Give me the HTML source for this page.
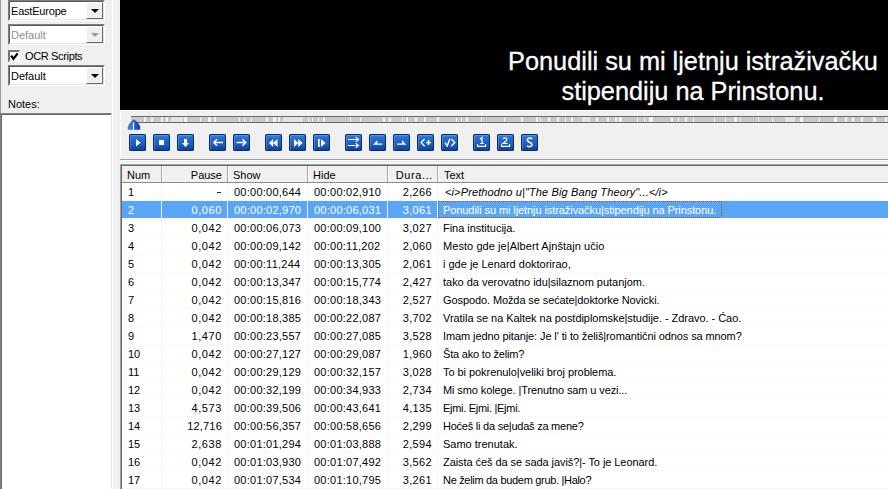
<!DOCTYPE html>
<html><head><meta charset="utf-8">
<style>
*{margin:0;padding:0;box-sizing:border-box}
html,body{width:888px;height:489px;overflow:hidden;background:#f0f0f0;font-family:"Liberation Sans",sans-serif;font-size:11px;color:#000;position:relative}
.sub{-webkit-text-stroke:0.3px #fff}
.a{position:absolute}
.combo{position:absolute;left:8px;width:97px;height:21px;background:#fff;border-top:1px solid #7f7f7f;border-left:1px solid #7f7f7f;border-right:1px solid #fff;border-bottom:1px solid #fff}
.combo .in{position:absolute;left:0;top:0;right:0;bottom:0;border-top:1px solid #5a5a5a;border-left:1px solid #5a5a5a;border-right:1px solid #e4e4e4;border-bottom:1px solid #e4e4e4}
.combo .t{position:absolute;left:1px;top:3px;line-height:13px;white-space:nowrap}
.combo .btn{position:absolute;right:0;top:0;width:17px;height:17px;background:#efefef;border-top:1px solid #fff;border-left:1px solid #fff;border-right:1px solid #6a6a6a;border-bottom:1px solid #6a6a6a}
.combo .btn:after{content:"";position:absolute;left:4px;top:6px;border-left:4px solid transparent;border-right:4px solid transparent;border-top:4px solid #000}
.combo.dis .t{color:#8f8f8f}
.combo.dis .btn:after{border-top-color:#9a9a9a}
.sub{position:absolute;left:420px;width:546px;text-align:center;color:#fff;font-size:25.3px;line-height:29px;white-space:nowrap}
.track{position:absolute;left:131px;top:116px;width:757px;height:7px;background:#c9c9c9;border-top:1px solid #6a6a6a;border-bottom:1px solid #6a6a6a}
.ts{position:absolute;top:117px;height:5px;background:#f2f2f2}
.b{position:absolute;top:134px;width:17px;height:17px;border-radius:2px;background:linear-gradient(#3f84da,#2469cc 30%,#1d5ec2 60%,#134caa 82%,#0c3c8c);box-shadow:inset 0 0 0 1px #082d68,inset 1px 1px 0 1px rgba(140,190,250,0.35)}
.b svg{position:absolute;left:0;top:0}
.hdr{position:absolute;left:122px;top:166px;width:766px;height:17px;background:#f0f0f0;border-bottom:1px solid #8c8c8c}
.hc{position:absolute;top:167px;height:16px;line-height:17px;white-space:nowrap}
.hsep{position:absolute;top:166px;width:1px;height:16px;background:#a6a6a6}
.hsepw{position:absolute;top:166px;width:1px;height:16px;background:#fdfdfd}
.row{position:absolute;left:122px;width:766px;height:18px;border-bottom:1px solid #f8f8f8;background-clip:padding-box}
.c{position:absolute;top:1px;line-height:17px;white-space:nowrap}
.r{text-align:right}
.tm{letter-spacing:0.25px}
.nm{letter-spacing:0.6px}
.tx{letter-spacing:-0.08px}
.it{font-style:italic;letter-spacing:0.15px}
.sel{background-color:#5aa6f6;color:#fff}
.vg{position:absolute;top:183px;width:1px;height:306px;background:#f6f6f6}
.vgs{position:absolute;top:201px;width:1px;height:17px;background:#eef6ff}
</style></head><body>
<!-- left panel -->
<div class="a" style="left:0;top:0;width:1px;height:489px;background:#9c9c9c"></div>
<div class="combo" style="top:0"><div class="in"><span class="t" style="letter-spacing:-0.2px">EastEurope</span><div class="btn"></div></div></div>
<div class="combo dis" style="top:24px"><div class="in"><span class="t">Default</span><div class="btn"></div></div></div>
<div class="a" style="left:8px;top:50px;width:12px;height:12px;background:#fff;border-top:2px solid #767676;border-left:2px solid #767676;border-right:1px solid #fafafa;border-bottom:1px solid #fafafa"></div>
<svg class="a" style="left:8px;top:50px" width="12" height="12"><path d="M3.2 5.6 L5.4 8.9 L9.7 3.4" stroke="#000" stroke-width="2.3" fill="none"/></svg>
<div class="a" style="left:25px;top:50px;line-height:13px;white-space:nowrap;letter-spacing:-0.35px">OCR Scripts</div>
<div class="combo" style="top:65px"><div class="in"><span class="t">Default</span><div class="btn"></div></div></div>
<div class="a" style="left:8px;top:98px;line-height:13px">Notes:</div>
<div class="a" style="left:0;top:113px;width:112px;height:376px;background:#fff;border-top:1px solid #808080;border-left:1px solid #808080;border-right:1px solid #e2e2e2"></div>
<div class="a" style="left:1px;top:114px;width:110px;height:375px;border-top:1px solid #6a6a6a;border-left:1px solid #6a6a6a"></div>
<div class="a" style="left:112px;top:0;width:1px;height:489px;background:#fcfcfc"></div>

<!-- video -->
<div class="a" style="left:120px;top:0;width:768px;height:110px;background:#000"></div>
<div class="sub" style="top:47px">Ponudili su mi ljetnju istraživačku</div>
<div class="sub" style="top:77px">stipendiju na Prinstonu.</div>
<div class="a" style="left:120px;top:110px;width:1px;height:49px;background:#fff"></div>
<div class="a" style="left:120px;top:110px;width:768px;height:1px;background:#fff"></div>

<!-- track -->
<div class="track"></div>
<div class="ts" style="left:144px;width:2px"></div><div class="ts" style="left:151px;width:2px"></div><div class="ts" style="left:161px;width:2px"></div><div class="ts" style="left:166px;width:2px"></div><div class="ts" style="left:171px;width:12px;background:#e2e2e2"></div><div class="ts" style="left:184px;width:3px"></div><div class="ts" style="left:200px;width:1px"></div><div class="ts" style="left:208px;width:3px"></div><div class="ts" style="left:214px;width:2px"></div><div class="ts" style="left:239px;width:1px"></div><div class="ts" style="left:244px;width:1px"></div><div class="ts" style="left:251px;width:1px"></div><div class="ts" style="left:266px;width:2px"></div><div class="ts" style="left:273px;width:3px"></div><div class="ts" style="left:278px;width:2px"></div><div class="ts" style="left:283px;width:8px;background:#e2e2e2"></div><div class="ts" style="left:291px;width:12px;background:#e2e2e2"></div><div class="ts" style="left:308px;width:1px"></div><div class="ts" style="left:312px;width:1px"></div><div class="ts" style="left:318px;width:1px"></div><div class="ts" style="left:323px;width:2px"></div><div class="ts" style="left:350px;width:1px"></div><div class="ts" style="left:360px;width:1px"></div><div class="ts" style="left:383px;width:2px"></div><div class="ts" style="left:389px;width:2px"></div><div class="ts" style="left:402px;width:1px"></div><div class="ts" style="left:406px;width:2px"></div><div class="ts" style="left:415px;width:2px"></div><div class="ts" style="left:424px;width:2px"></div><div class="ts" style="left:437px;width:2px"></div><div class="ts" style="left:456px;width:1px"></div><div class="ts" style="left:461px;width:1px"></div><div class="ts" style="left:466px;width:2px"></div><div class="ts" style="left:481px;width:1px"></div><div class="ts" style="left:504px;width:1px"></div><div class="ts" style="left:521px;width:2px"></div><div class="ts" style="left:536px;width:2px"></div><div class="ts" style="left:540px;width:1px"></div><div class="ts" style="left:548px;width:2px"></div><div class="ts" style="left:557px;width:2px"></div><div class="ts" style="left:565px;width:1px"></div><div class="ts" style="left:571px;width:2px"></div><div class="ts" style="left:582px;width:8px;background:#e2e2e2"></div><div class="ts" style="left:596px;width:2px"></div><div class="ts" style="left:607px;width:2px"></div><div class="ts" style="left:615px;width:2px"></div><div class="ts" style="left:619px;width:3px"></div><div class="ts" style="left:637px;width:1px"></div><div class="ts" style="left:644px;width:1px"></div><div class="ts" style="left:649px;width:4px"></div><div class="ts" style="left:671px;width:2px"></div><div class="ts" style="left:678px;width:1px"></div><div class="ts" style="left:685px;width:2px"></div><div class="ts" style="left:693px;width:1px"></div><div class="ts" style="left:714px;width:1px"></div><div class="ts" style="left:725px;width:1px"></div><div class="ts" style="left:734px;width:3px"></div><div class="ts" style="left:740px;width:1px"></div><div class="ts" style="left:758px;width:1px"></div><div class="ts" style="left:772px;width:1px"></div><div class="ts" style="left:785px;width:10px;background:#e2e2e2"></div><div class="ts" style="left:800px;width:3px"></div><div class="ts" style="left:819px;width:1px"></div><div class="ts" style="left:834px;width:3px"></div><div class="ts" style="left:845px;width:2px"></div><div class="ts" style="left:852px;width:2px"></div><div class="ts" style="left:861px;width:2px"></div><div class="ts" style="left:873px;width:3px"></div><div class="ts" style="left:885px;width:2px"></div>
<svg class="a" style="left:127px;top:119px" width="14" height="12" viewBox="0 0 14 12"><defs><linearGradient id="tg" x1="0" x2="1" y1="0" y2="0"><stop offset="0" stop-color="#4a8ae0"/><stop offset="0.5" stop-color="#2a5cc8"/><stop offset="1" stop-color="#1a3aa8"/></linearGradient></defs><path d="M7 0.6 Q9 1.6 12 5 Q13.6 7.2 13.2 10.8 H0.8 Q0.4 7.2 2 5 Q5 1.6 7 0.6 Z" fill="url(#tg)"/><path d="M6.5 3.2 V10.8" stroke="#fff" stroke-width="1.3"/></svg>

<!-- buttons -->
<div class="b" style="left:129px"><svg width="17" height="17" viewBox="0 0 17 17"><path d="M7 5 L11.6 8.8 L7 12.6 Z" fill="#fff"/></svg></div>
<div class="b" style="left:153px"><svg width="17" height="17" viewBox="0 0 17 17"><rect x="6" y="6" width="5" height="5" fill="#fff"/></svg></div>
<div class="b" style="left:177px"><svg width="17" height="17" viewBox="0 0 17 17"><path d="M7 5 H10 V9 H12 L8.5 13 L5 9 H7 Z" fill="#fff"/></svg></div>
<div class="b" style="left:209px"><svg width="17" height="17" viewBox="0 0 17 17"><path d="M4.8 8.5 H14 M8 5.2 L4.8 8.5 L8 11.8" stroke="#fff" stroke-width="1.5" fill="none"/></svg></div>
<div class="b" style="left:233px"><svg width="17" height="17" viewBox="0 0 17 17"><path d="M3.5 8.5 H12.7 M9.5 5.2 L12.7 8.5 L9.5 11.8" stroke="#fff" stroke-width="1.5" fill="none"/></svg></div>
<div class="b" style="left:265px"><svg width="17" height="17" viewBox="0 0 17 17"><path d="M8.2 5 L4 9 L8.2 13 Z M12.5 5 L8.2 9 L12.5 13 Z" fill="#fff"/></svg></div>
<div class="b" style="left:289px"><svg width="17" height="17" viewBox="0 0 17 17"><path d="M5 5 L9.2 9 L5 13 Z M9.2 5 L13.5 9 L9.2 13 Z" fill="#fff"/></svg></div>
<div class="b" style="left:313px"><svg width="17" height="17" viewBox="0 0 17 17"><rect x="5" y="5" width="1.7" height="8" fill="#fff"/><path d="M8 5 L12.5 9 L8 13 Z" fill="#fff"/></svg></div>
<div class="b" style="left:345px"><svg width="17" height="17" viewBox="0 0 17 17"><path d="M3 5.5 H13.3 M10.8 3.3 L13.5 5.5 L10.8 7.7 M3 11.5 H13.3 M10.8 9.3 L13.5 11.5 L10.8 13.7" stroke="#fff" stroke-width="1.2" fill="none"/></svg></div>
<div class="b" style="left:369px"><svg width="17" height="17" viewBox="0 0 17 17"><path d="M4 10.8 L8.3 6.2 V9.5 H13.2 V10.8 Z" fill="#fff"/></svg></div>
<div class="b" style="left:393px"><svg width="17" height="17" viewBox="0 0 17 17"><path d="M4 9.5 H9 V6.2 L13.3 10.8 H4 Z" fill="#fff"/></svg></div>
<div class="b" style="left:417px"><svg width="17" height="17" viewBox="0 0 17 17"><path d="M7.6 5 L4.2 8.6 L7.6 12.2 M9 8.6 H14 M11.5 6.1 V11.1" stroke="#fff" stroke-width="1.4" fill="none"/></svg></div>
<div class="b" style="left:441px"><svg width="17" height="17" viewBox="0 0 17 17"><path d="M4 8.6 L6.2 12 L8.8 5 M10.2 5 L13.8 8.6 L10.2 12.2" stroke="#fff" stroke-width="1.4" fill="none"/></svg></div>
<div class="b" style="left:473px"><svg width="17" height="17" viewBox="0 0 17 17"><path d="M4.6 10 V12.4 H12.6 V10" stroke="#fff" stroke-width="1.1" fill="none"/><path d="M7 5.2 L9 3.6 V9.6 M7.2 9.5 H10.8" stroke="#fff" stroke-width="1.2" fill="none"/></svg></div>
<div class="b" style="left:497px"><svg width="17" height="17" viewBox="0 0 17 17"><path d="M4.6 10 V12.4 H12.6 V10" stroke="#fff" stroke-width="1.1" fill="none"/><path d="M5.9 4.9 Q7.6 3.2 9.4 4.2 Q10.6 5.6 9 7 L6 9.5 H10.6" stroke="#fff" stroke-width="1.2" fill="none"/></svg></div>
<div class="b" style="left:521px"><svg width="17" height="17" viewBox="0 0 17 17"><path d="M11.2 4.8 Q9.2 3.6 7.3 4.4 Q5.6 5.6 7 7.4 Q8 8.2 9.6 8.8 Q11.6 10 10.6 11.8 Q8.8 13.4 6 12" stroke="#fff" stroke-width="1.5" fill="none"/></svg></div>

<div class="a" style="left:120px;top:159px;width:768px;height:1px;background:#a0a0a0"></div>
<div class="a" style="left:120px;top:160px;width:768px;height:1px;background:#fff"></div>
<div class="a" style="left:120px;top:163px;width:768px;height:1px;background:#fbfbfb"></div>

<!-- list view -->
<div class="a" style="left:120px;top:164px;width:768px;height:325px;background:#fff;border-top:1px solid #a0a0a0;border-left:1px solid #a0a0a0"></div>
<div class="a" style="left:121px;top:165px;width:767px;height:324px;border-top:1px solid #696969;border-left:1px solid #696969"></div>
<div class="hdr"></div>
<div class="hsep" style="left:161px"></div><div class="hsepw" style="left:162px"></div>
<div class="hsep" style="left:227px"></div><div class="hsepw" style="left:228px"></div>
<div class="hsep" style="left:307px"></div><div class="hsepw" style="left:308px"></div>
<div class="hsep" style="left:387px"></div><div class="hsepw" style="left:388px"></div>
<div class="hsep" style="left:437px"></div><div class="hsepw" style="left:438px"></div>
<div class="hc" style="left:127px">Num</div>
<div class="hc r" style="left:162px;width:60px">Pause</div>
<div class="hc" style="left:233px">Show</div>
<div class="hc" style="left:313px">Hide</div>
<div class="hc r" style="left:380px;width:53px;letter-spacing:0.6px">Dura...</div>
<div class="hc" style="left:444px">Text</div>
<div class="vg" style="left:161px"></div><div class="vg" style="left:227px"></div><div class="vg" style="left:307px"></div><div class="vg" style="left:387px"></div><div class="vg" style="left:437px"></div>
<div class="row" style="top:183px"><div class="c" style="left:6px">1</div><div class="a" style="left:95px;top:9px;width:4px;height:1px;background:#1a1a1a"></div><div class="c tm" style="left:112px">00:00:00,644</div><div class="c tm" style="left:192px">00:00:02,910</div><div class="c r nm" style="left:265px;width:45px;letter-spacing:0.35px">2,266</div><div class="c tx it" style="left:323px;letter-spacing:0.125px">&lt;i&gt;Prethodno u|&quot;The Big Bang Theory&quot;...&lt;/i&gt;</div></div>
<div class="row sel" style="top:201px"><div class="c" style="left:6px">2</div><div class="c r nm" style="left:39px;width:61px">0,060</div><div class="c tm" style="left:112px">00:00:02,970</div><div class="c tm" style="left:192px">00:00:06,031</div><div class="c r nm" style="left:265px;width:45px;letter-spacing:0.35px">3,061</div><div class="c tx" style="left:321px;letter-spacing:-0.08px">Ponudili su mi ljetnju istraživačku|stipendiju na Prinstonu.</div></div>
<div class="row" style="top:219px"><div class="c" style="left:6px">3</div><div class="c r nm" style="left:39px;width:61px">0,042</div><div class="c tm" style="left:112px">00:00:06,073</div><div class="c tm" style="left:192px">00:00:09,100</div><div class="c r nm" style="left:265px;width:45px;letter-spacing:0.35px">3,027</div><div class="c tx" style="left:321px;letter-spacing:-0.024px">Fina institucija.</div></div>
<div class="row" style="top:237px"><div class="c" style="left:6px">4</div><div class="c r nm" style="left:39px;width:61px">0,042</div><div class="c tm" style="left:112px">00:00:09,142</div><div class="c tm" style="left:192px">00:00:11,202</div><div class="c r nm" style="left:265px;width:45px;letter-spacing:0.35px">2,060</div><div class="c tx" style="left:321px;letter-spacing:0.064px">Mesto gde je|Albert Ajnštajn učio</div></div>
<div class="row" style="top:255px"><div class="c" style="left:6px">5</div><div class="c r nm" style="left:39px;width:61px">0,042</div><div class="c tm" style="left:112px">00:00:11,244</div><div class="c tm" style="left:192px">00:00:13,305</div><div class="c r nm" style="left:265px;width:45px;letter-spacing:0.35px">2,061</div><div class="c tx" style="left:321px;letter-spacing:-0.003px">i gde je Lenard doktorirao,</div></div>
<div class="row" style="top:273px"><div class="c" style="left:6px">6</div><div class="c r nm" style="left:39px;width:61px">0,042</div><div class="c tm" style="left:112px">00:00:13,347</div><div class="c tm" style="left:192px">00:00:15,774</div><div class="c r nm" style="left:265px;width:45px;letter-spacing:0.35px">2,427</div><div class="c tx" style="left:321px;letter-spacing:-0.021px">tako da verovatno idu|silaznom putanjom.</div></div>
<div class="row" style="top:291px"><div class="c" style="left:6px">7</div><div class="c r nm" style="left:39px;width:61px">0,042</div><div class="c tm" style="left:112px">00:00:15,816</div><div class="c tm" style="left:192px">00:00:18,343</div><div class="c r nm" style="left:265px;width:45px;letter-spacing:0.35px">2,527</div><div class="c tx" style="left:321px;letter-spacing:-0.097px">Gospodo. Možda se sećate|doktorke Novicki.</div></div>
<div class="row" style="top:309px"><div class="c" style="left:6px">8</div><div class="c r nm" style="left:39px;width:61px">0,042</div><div class="c tm" style="left:112px">00:00:18,385</div><div class="c tm" style="left:192px">00:00:22,087</div><div class="c r nm" style="left:265px;width:45px;letter-spacing:0.35px">3,702</div><div class="c tx" style="left:321px;letter-spacing:-0.04px">Vratila se na Kaltek na postdiplomske|studije. - Zdravo. - Ćao.</div></div>
<div class="row" style="top:327px"><div class="c" style="left:6px">9</div><div class="c r nm" style="left:39px;width:61px">1,470</div><div class="c tm" style="left:112px">00:00:23,557</div><div class="c tm" style="left:192px">00:00:27,085</div><div class="c r nm" style="left:265px;width:45px;letter-spacing:0.35px">3,528</div><div class="c tx" style="left:321px;letter-spacing:-0.103px">Imam jedno pitanje: Je l&#x27; ti to želiš|romantični odnos sa mnom?</div></div>
<div class="row" style="top:345px"><div class="c" style="left:6px">10</div><div class="c r nm" style="left:39px;width:61px">0,042</div><div class="c tm" style="left:112px">00:00:27,127</div><div class="c tm" style="left:192px">00:00:29,087</div><div class="c r nm" style="left:265px;width:45px;letter-spacing:0.35px">1,960</div><div class="c tx" style="left:321px;letter-spacing:-0.186px">Šta ako to želim?</div></div>
<div class="row" style="top:363px"><div class="c" style="left:6px">11</div><div class="c r nm" style="left:39px;width:61px">0,042</div><div class="c tm" style="left:112px">00:00:29,129</div><div class="c tm" style="left:192px">00:00:32,157</div><div class="c r nm" style="left:265px;width:45px;letter-spacing:0.35px">3,028</div><div class="c tx" style="left:321px;letter-spacing:-0.052px">To bi pokrenulo|veliki broj problema.</div></div>
<div class="row" style="top:381px"><div class="c" style="left:6px">12</div><div class="c r nm" style="left:39px;width:61px">0,042</div><div class="c tm" style="left:112px">00:00:32,199</div><div class="c tm" style="left:192px">00:00:34,933</div><div class="c r nm" style="left:265px;width:45px;letter-spacing:0.35px">2,734</div><div class="c tx" style="left:321px;letter-spacing:-0.107px">Mi smo kolege. |Trenutno sam u vezi...</div></div>
<div class="row" style="top:399px"><div class="c" style="left:6px">13</div><div class="c r nm" style="left:39px;width:61px">4,573</div><div class="c tm" style="left:112px">00:00:39,506</div><div class="c tm" style="left:192px">00:00:43,641</div><div class="c r nm" style="left:265px;width:45px;letter-spacing:0.35px">4,135</div><div class="c tx" style="left:321px;letter-spacing:-0.292px">Ejmi. Ejmi. |Ejmi.</div></div>
<div class="row" style="top:417px"><div class="c" style="left:6px">14</div><div class="c r nm" style="left:39px;width:61px;letter-spacing:0.2px">12,716</div><div class="c tm" style="left:112px">00:00:56,357</div><div class="c tm" style="left:192px">00:00:58,656</div><div class="c r nm" style="left:265px;width:45px;letter-spacing:0.35px">2,299</div><div class="c tx" style="left:321px;letter-spacing:-0.236px">Hoćeš li da se|udaš za mene?</div></div>
<div class="row" style="top:435px"><div class="c" style="left:6px">15</div><div class="c r nm" style="left:39px;width:61px">2,638</div><div class="c tm" style="left:112px">00:01:01,294</div><div class="c tm" style="left:192px">00:01:03,888</div><div class="c r nm" style="left:265px;width:45px;letter-spacing:0.35px">2,594</div><div class="c tx" style="left:321px;letter-spacing:-0.003px">Samo trenutak.</div></div>
<div class="row" style="top:453px"><div class="c" style="left:6px">16</div><div class="c r nm" style="left:39px;width:61px">0,042</div><div class="c tm" style="left:112px">00:01:03,930</div><div class="c tm" style="left:192px">00:01:07,492</div><div class="c r nm" style="left:265px;width:45px;letter-spacing:0.35px">3,562</div><div class="c tx" style="left:321px;letter-spacing:-0.069px">Zaista ćeš da se sada javiš?|- To je Leonard.</div></div>
<div class="row" style="top:471px"><div class="c" style="left:6px">17</div><div class="c r nm" style="left:39px;width:61px">0,042</div><div class="c tm" style="left:112px">00:01:07,534</div><div class="c tm" style="left:192px">00:01:10,795</div><div class="c r nm" style="left:265px;width:45px;letter-spacing:0.35px">3,261</div><div class="c tx" style="left:321px;letter-spacing:-0.311px">Ne želim da budem grub. |Halo?</div></div>
<div class="vgs" style="left:161px"></div><div class="vgs" style="left:227px"></div><div class="vgs" style="left:307px"></div><div class="vgs" style="left:387px"></div><div class="vgs" style="left:437px"></div>
<div class="a" style="left:438px;top:201px;width:284px;height:17px;border:1px dotted #a05a20"></div>
</body></html>
